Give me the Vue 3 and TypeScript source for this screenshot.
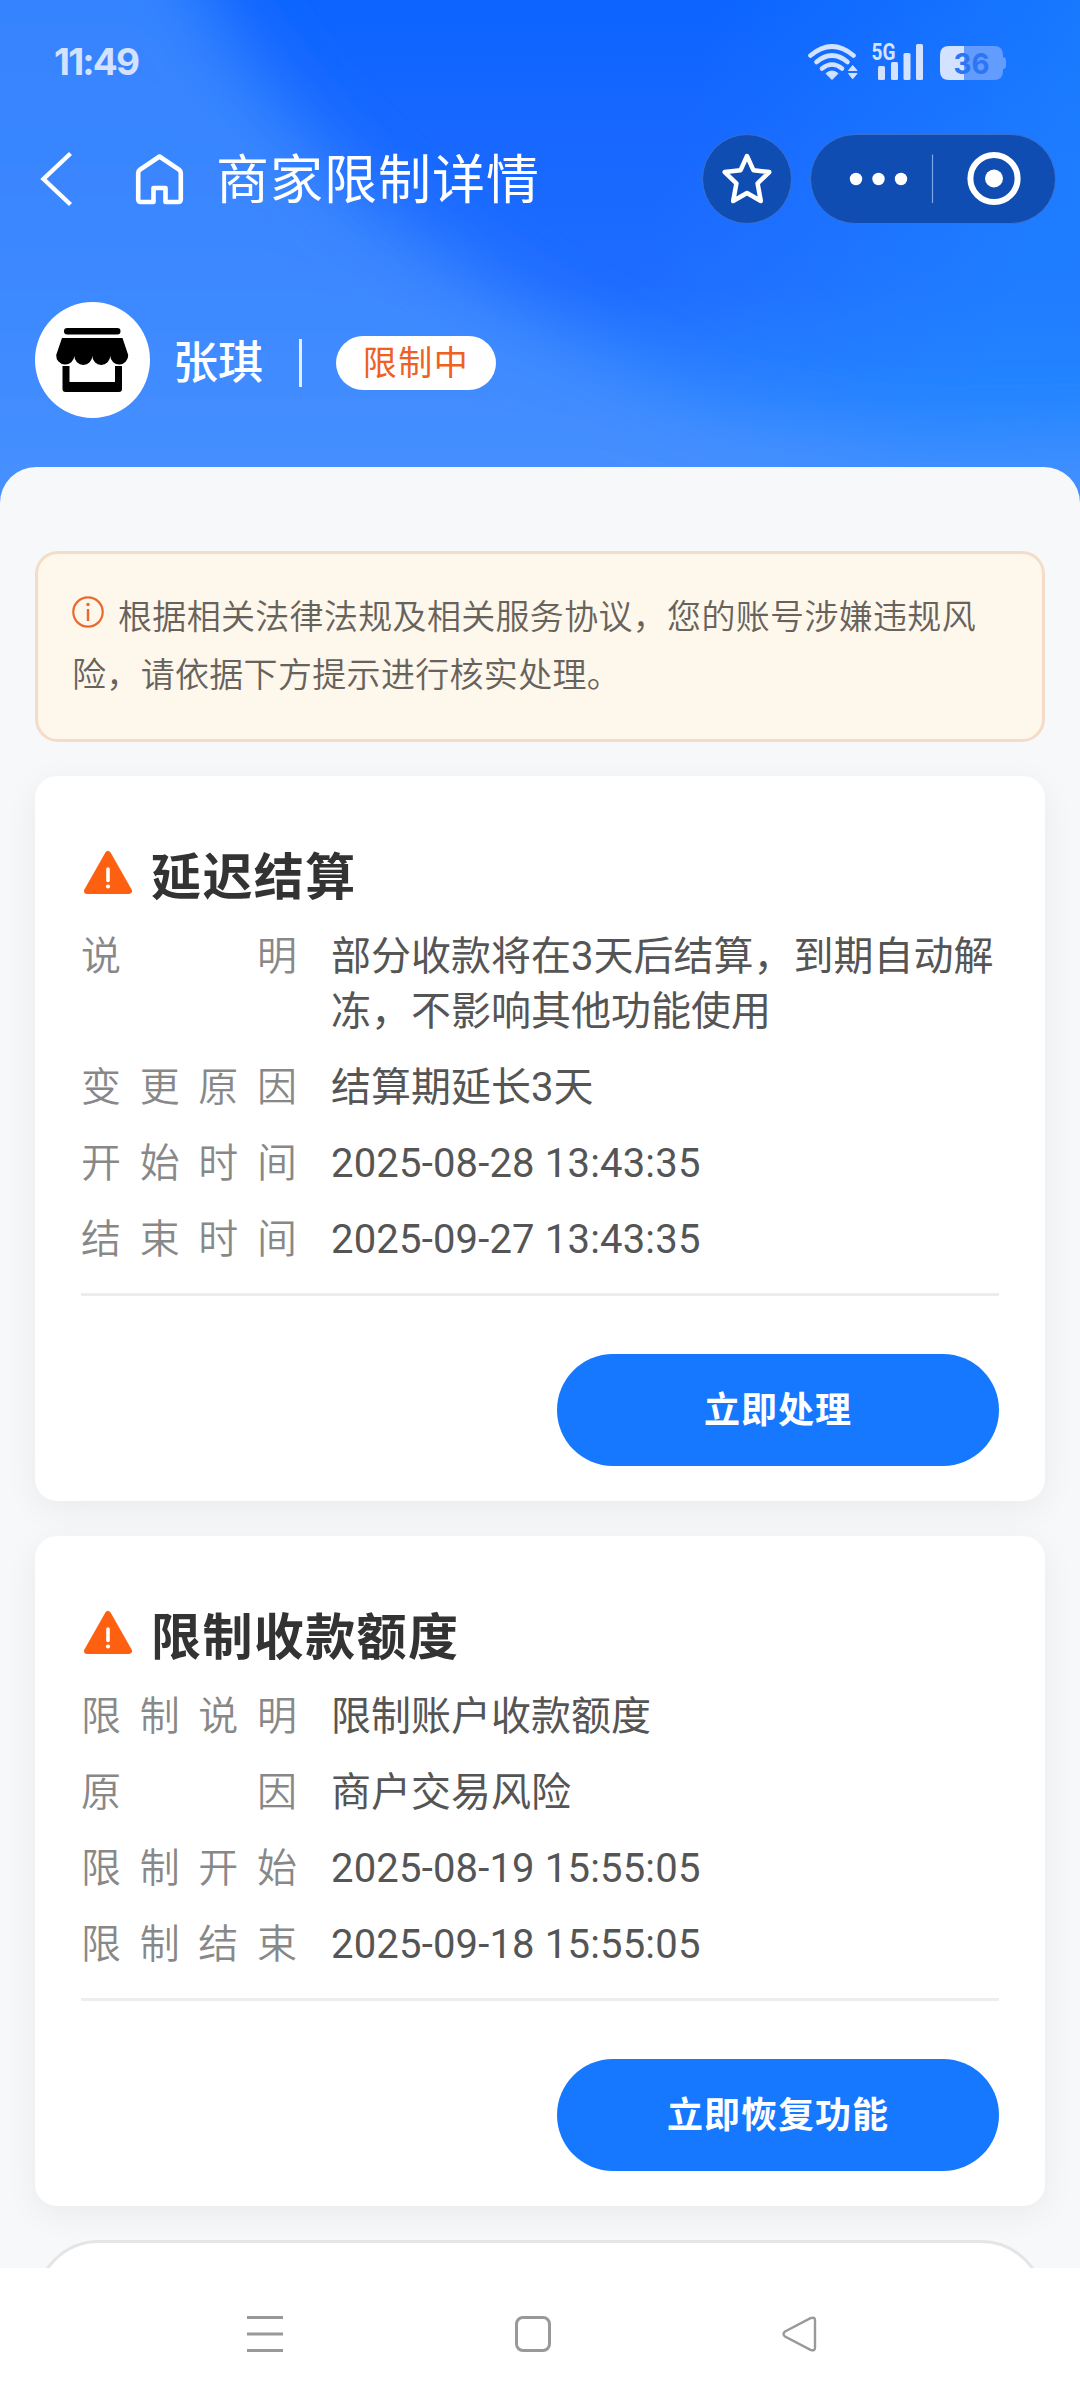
<script setup lang="ts">
interface Row {
  label: string
  lines: string[]
  numeric?: boolean
}

interface Restriction {
  title: string
  rows: Row[]
  action: string
}

const restrictions: Restriction[] = [
  {
    title: '延迟结算',
    rows: [
      { label: '说明', lines: ['部分收款将在3天后结算，到期自动解', '冻，不影响其他功能使用'] },
      { label: '变更原因', lines: ['结算期延长3天'] },
      { label: '开始时间', lines: ['2025-08-28 13:43:35'], numeric: true },
      { label: '结束时间', lines: ['2025-09-27 13:43:35'], numeric: true },
    ],
    action: '立即处理',
  },
  {
    title: '限制收款额度',
    rows: [
      { label: '限制说明', lines: ['限制账户收款额度'] },
      { label: '原因', lines: ['商户交易风险'] },
      { label: '限制开始', lines: ['2025-08-19 15:55:05'], numeric: true },
      { label: '限制结束', lines: ['2025-09-18 15:55:05'], numeric: true },
    ],
    action: '立即恢复功能',
  },
]
</script>

<template>
  <div class="screen">
    <svg class="backdrop" width="1080" height="520" viewBox="0 0 1080 520" aria-hidden="true">
      <defs>
        <linearGradient id="base" x1="0" y1="0" x2="0" y2="1">
          <stop offset="0" stop-color="#0d64ff" />
          <stop offset="0.3" stop-color="#1868ff" />
          <stop offset="0.55" stop-color="#1f6cff" />
          <stop offset="0.77" stop-color="#2a7fff" />
          <stop offset="0.9" stop-color="#3f8fff" />
          <stop offset="1" stop-color="#4590ff" />
        </linearGradient>
        <linearGradient id="light" x1="0" y1="0" x2="0" y2="1">
          <stop offset="0" stop-color="#3381ff" />
          <stop offset="0.5" stop-color="#3c88ff" />
          <stop offset="1" stop-color="#4f97ff" />
        </linearGradient>
        <linearGradient id="edge" x1="0" y1="0" x2="1" y2="0.15">
          <stop offset="0.65" stop-color="#2088ff" stop-opacity="0" />
          <stop offset="1" stop-color="#2088ff" stop-opacity="0.6" />
        </linearGradient>
        <filter id="soft" x="-20%" y="-30%" width="140%" height="160%">
          <feGaussianBlur stdDeviation="38" />
        </filter>
      </defs>
      <rect width="1080" height="520" fill="url(#base)" />
      <rect width="1080" height="520" fill="url(#edge)" />
      <path
        d="M-200-150H160L206 0L275 100L365 200L505 300L620 368L720 418L900 452L1080 448L1280 440V700H-200Z"
        fill="url(#light)"
        filter="url(#soft)"
      />
    </svg>

    <header class="top">
      <div class="status">
        <span class="clock">11:49</span>
        <svg width="200" height="45" viewBox="807 38 200 45" aria-hidden="true">
          <g fill="none" stroke="#d3e3ff" stroke-width="4.6" stroke-linecap="round">
            <path d="M810.500 55.500Q832 37.500 853.500 55.500" />
            <path d="M816.500 62Q832 49 847.500 62" />
            <path d="M822 68.500Q832 60.500 842 68.500" />
          </g>
          <path d="M826 73.500Q832 68.500 838 73.500L832 79.500Z" fill="#d3e3ff" stroke="#d3e3ff" stroke-linejoin="round" />
          <path d="M848.500 70.500L852.700 65.500L857 70.500ZM848.500 73.500H857L852.700 78.800Z" fill="#d3e3ff" stroke="#d3e3ff" stroke-linejoin="round" />
          <g fill="#d3e3ff">
            <rect x="878" y="66" width="7" height="14" rx="1.500" />
            <rect x="891" y="62" width="7" height="18" rx="1.500" />
            <rect x="903.500" y="53" width="7" height="27" rx="1.500" />
            <rect x="916" y="44" width="7" height="36" rx="1.500" />
          </g>
          <text class="net" x="871.500" y="59.500" textLength="24" lengthAdjust="spacingAndGlyphs">5G</text>
          <path d="M964 46H994Q1003 46 1003 55V57Q1006 57.500 1006 60V66Q1006 68.500 1003 69V71Q1003 80 994 80H964Z" fill="#629cff" />
          <path d="M964 46H949Q940 46 940 55V71Q940 80 949 80H964Z" fill="#d3e3ff" />
          <text class="level" x="953.500" y="74" textLength="36" lengthAdjust="spacingAndGlyphs">36</text>
        </svg>
      </div>

      <div class="nav">
        <svg width="150" height="60" viewBox="38 149 150 60" fill="none" stroke="#fff" aria-hidden="true">
          <path d="M70.500 153.500L43.500 179L70.500 204.500" stroke-width="4.400" />
          <path
            d="M153.500 202H141Q138.200 202 138.200 199.200V173Q138.200 171 140 169.600L159.500 156.500L179 169.600Q180.800 171 180.800 173V199.200Q180.800 202 178 202H165.500V188H153.500Z"
            stroke-width="4.600"
            stroke-linejoin="round"
          />
        </svg>
        <h1 class="page-title">商家限制详情</h1>
        <button class="round" aria-label="收藏">
          <svg width="56" height="56" viewBox="0 0 56 56" aria-hidden="true">
            <path
              d="M28 5L34.400 19.200L50.300 21.100L38.600 32.300L41.800 50L28 42L14.200 50L17.400 32.300L5.700 21.100L21.600 19.200Z"
              fill="none"
              stroke="#fff"
              stroke-width="4.500"
              stroke-linejoin="round"
            />
          </svg>
        </button>
        <div class="capsule">
          <svg width="246" height="90" viewBox="0 0 246 90" aria-hidden="true">
            <g fill="#fff">
              <circle cx="46" cy="45" r="6.200" />
              <circle cx="68.500" cy="45" r="6.200" />
              <circle cx="91" cy="45" r="6.200" />
              <circle cx="184" cy="44.500" r="9" />
            </g>
            <path d="M122.500 20.500V69" stroke="#7fa6e8" stroke-width="1.200" />
            <circle cx="184" cy="44.500" r="23.600" fill="none" stroke="#fff" stroke-width="6" />
          </svg>
        </div>
      </div>

      <div class="merchant">
        <div class="avatar">
          <svg width="74" height="66" viewBox="55 327 74 66" aria-hidden="true">
            <rect x="64" y="328" width="56.500" height="6.500" rx="3.200" />
            <path d="M62 338H122.500L128.200 355A8.900 8.900 0 0 1 110.200 356A8.900 8.900 0 0 1 92.300 356A8.900 8.900 0 0 1 74.300 356A8.900 8.900 0 0 1 56.200 355Z" />
            <path d="M62.500 366H69.500V382H115V366H122V389Q122 392 119 392H65.500Q62.500 392 62.500 389Z" />
          </svg>
        </div>
        <span class="name">张琪</span>
        <i class="bar"></i>
        <span class="tag">限制中</span>
      </div>
    </header>

    <main class="sheet">
      <section class="notice">
        <svg class="info" width="34" height="34" viewBox="0 0 34 34" aria-hidden="true">
          <circle cx="17" cy="17" r="14.700" fill="none" stroke="#e9692f" stroke-width="2.200" />
          <circle cx="17" cy="9.500" r="1.700" fill="#e9692f" />
          <path d="M17 14V26" stroke="#e9692f" stroke-width="2.400" />
        </svg>
        <p>根据相关法律法规及相关服务协议，您的账号涉嫌违规风<br />险，请依据下方提示进行核实处理。</p>
      </section>

      <section v-for="item in restrictions" :key="item.title" class="card">
        <h2>
          <svg width="50" height="46" viewBox="0 0 50 46" aria-hidden="true">
            <path d="M25 4L46 41H4Z" fill="#fe6011" stroke="#fe6011" stroke-width="6" stroke-linejoin="round" />
            <path d="M25 19V30.500" stroke="#fff" stroke-width="3.600" stroke-linecap="round" />
            <circle cx="25" cy="36.500" r="2.100" fill="#fff" />
          </svg>
          <span>{{ item.title }}</span>
        </h2>
        <dl>
          <div v-for="row in item.rows" :key="row.label" class="row">
            <dt><span v-for="ch in row.label" :key="ch">{{ ch }}</span></dt>
            <dd :class="{ numeric: row.numeric }"><span v-for="line in row.lines" :key="line">{{ line }}</span></dd>
          </div>
        </dl>
        <div class="actions">
          <button class="primary">{{ item.action }}</button>
        </div>
      </section>

      <div class="next"></div>
    </main>

    <footer class="system">
      <svg width="1080" height="132" viewBox="0 2268 1080 132" fill="none" stroke="#999" stroke-width="3" aria-hidden="true">
        <path d="M247 2317.500H283M247 2334H283M247 2350.500H283" />
        <rect x="516.500" y="2317.500" width="33" height="33" rx="6.500" />
        <path d="M785 2331.500L810.500 2318.200Q815 2316.500 815 2320.500V2347.500Q815 2351.500 810.500 2349.800L785 2336.500Q782 2334 785 2331.500Z" stroke-width="2.400" />
      </svg>
    </footer>
  </div>
</template>

<style>
body {
  margin: 0;
}
</style>

<style scoped>
.screen {
  position: relative;
  display: flex;
  flex-direction: column;
  width: 1080px;
  height: 2400px;
  overflow: hidden;
  background: #f6f8fa;
  font-family: Roboto, 'Noto Sans CJK SC', sans-serif;
}

svg {
  display: block;
  flex: none;
}

h1,
h2,
p,
dl,
dd {
  margin: 0;
}

button {
  padding: 0;
  border: 0;
  font-family: inherit;
}

.backdrop {
  position: absolute;
  inset: 0 auto auto 0;
}

.top {
  position: relative;
  flex: none;
  height: 467px;
}

.status {
  display: flex;
  justify-content: space-between;
  height: 91px;
  padding: 38px 73px 0 54px;
  box-sizing: border-box;
}

.clock {
  margin-top: 5px;
  color: #d3e3ff;
  font: 700 37px/37px Inter, sans-serif;
  letter-spacing: -1.8px;
}

.net {
  fill: #d3e3ff;
  font: 700 23px Roboto, sans-serif;
}

.level {
  fill: #2c75f5;
  font: 700 29px Inter, sans-serif;
}

.nav {
  display: flex;
  align-items: center;
  height: 176px;
  padding: 0 24px 0 38px;
}

.page-title {
  margin: 3px 0 0 28px;
  color: #fff;
  font-size: 53px;
  font-weight: 400;
  line-height: 70px;
  letter-spacing: 1px;
}

.round,
.capsule {
  display: flex;
  align-items: center;
  justify-content: center;
  height: 90px;
  border: 1px solid #3b70d0;
  border-radius: 45px;
  box-sizing: border-box;
  background: #104db2;
}

.round {
  width: 90px;
  margin-left: auto;
}

.capsule {
  width: 246px;
  margin-left: 18px;
}

.merchant {
  display: flex;
  align-items: center;
  height: 116px;
  margin-top: 35px;
  padding-left: 35px;
}

.avatar {
  display: flex;
  align-items: center;
  justify-content: center;
  width: 115px;
  height: 116px;
  border-radius: 50%;
  background: #fff;
}

.avatar svg {
  margin-right: 2px;
}

.name {
  margin: 8px 0 0 23px;
  color: #fff;
  font-size: 45px;
  font-weight: 500;
  line-height: 60px;
}

.bar {
  width: 3px;
  height: 48px;
  margin: 6px 34px 0 36px;
  background: #e4eeff;
}

.tag {
  width: 160px;
  height: 54px;
  margin-top: 6px;
  border-radius: 27px;
  background: #fff;
  color: #ee6122;
  font-size: 34px;
  line-height: 55px;
  letter-spacing: 1.5px;
  text-align: center;
}

.sheet {
  position: relative;
  display: flex;
  flex: none;
  flex-direction: column;
  gap: 35px;
  height: 1801px;
  padding: 84px 35px 0;
  border-radius: 36px 36px 0 0;
  box-sizing: border-box;
  overflow: hidden;
  background: #f6f8fa;
}

.notice {
  display: flex;
  flex: none;
  height: 191px;
  margin-bottom: -1px;
  padding: 34px 33px 0;
  border: 3px solid #f5dcc8;
  border-radius: 23px;
  box-sizing: border-box;
  background: #fef7eb;
}

.info {
  margin-top: 7px;
}

.notice p {
  flex: none;
  margin-left: -33px;
  color: #67625c;
  font-size: 34px;
  font-weight: 350;
  line-height: 58px;
  letter-spacing: 0.32px;
  text-indent: 46px;
  white-space: nowrap;
}

.card {
  flex: none;
  padding: 70px 46px 35px;
  border-radius: 22px;
  background: #fff;
  box-shadow: 0 8px 34px rgba(0, 0, 0, 0.06);
}

h2 {
  display: flex;
  align-items: center;
  gap: 18px;
  height: 64px;
  margin-bottom: 19px;
  color: #333;
  font-size: 50px;
  font-weight: 700;
  line-height: 64px;
  letter-spacing: 1.4px;
}

h2 svg {
  margin: -11px 0 0 2px;
}

dl {
  display: flex;
  flex-direction: column;
  gap: 21px;
  padding-bottom: 26px;
  border-bottom: 3px solid #ededed;
  font-size: 40px;
  line-height: 55px;
}

.row {
  display: flex;
  gap: 34px;
}

dt {
  display: flex;
  flex: none;
  justify-content: space-between;
  width: 216px;
  color: #888;
  font-weight: 350;
}

dd {
  display: flex;
  flex-direction: column;
  color: #555;
  white-space: nowrap;
}

dd span {
  height: 55px;
}

.numeric {
  letter-spacing: 0.18px;
}

.actions {
  display: flex;
  justify-content: flex-end;
  padding-top: 58px;
}

.primary {
  width: 442px;
  height: 112px;
  padding-bottom: 6px;
  border-radius: 56px;
  background: #1677ff;
  color: #fff;
  font-size: 36px;
  font-weight: 700;
  letter-spacing: 1px;
}

.next {
  flex: none;
  height: 140px;
  margin-top: -1px;
  border: 3px solid #e5e5e5;
  border-radius: 64px;
  box-sizing: border-box;
  background: #fff;
}

.system {
  position: relative;
  flex: none;
  height: 132px;
  background: #fff;
}
</style>
